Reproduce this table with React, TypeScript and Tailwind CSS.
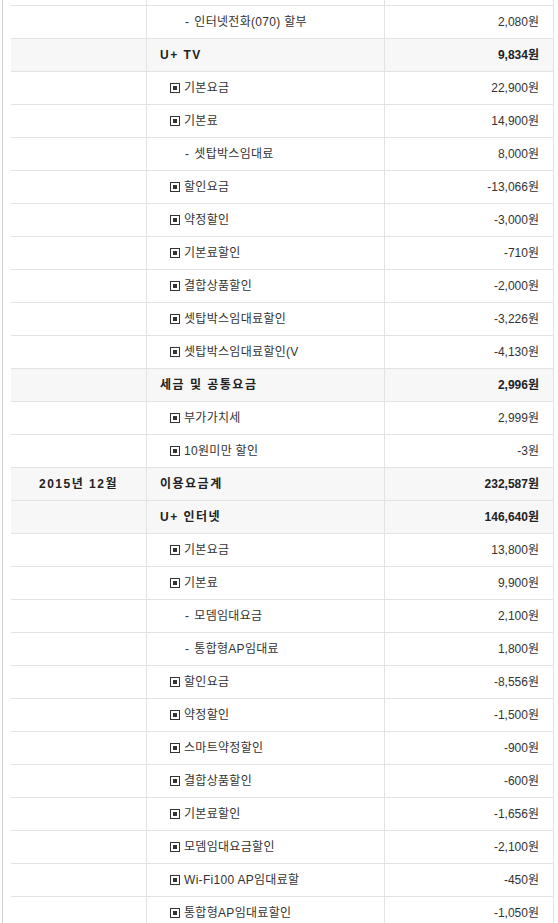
type Row = {
  month?: string;
  label: string;
  amount: string;
  kind: "head" | "item" | "sub";
};

const rows: Row[] = [
  { label: "인터넷전화(070) 할부", amount: "2,080원", kind: "sub" },
  { label: "U+ TV", amount: "9,834원", kind: "head" },
  { label: "기본요금", amount: "22,900원", kind: "item" },
  { label: "기본료", amount: "14,900원", kind: "item" },
  { label: "셋탑박스임대료", amount: "8,000원", kind: "sub" },
  { label: "할인요금", amount: "-13,066원", kind: "item" },
  { label: "약정할인", amount: "-3,000원", kind: "item" },
  { label: "기본료할인", amount: "-710원", kind: "item" },
  { label: "결합상품할인", amount: "-2,000원", kind: "item" },
  { label: "셋탑박스임대료할인", amount: "-3,226원", kind: "item" },
  { label: "셋탑박스임대료할인(V", amount: "-4,130원", kind: "item" },
  { label: "세금 및 공통요금", amount: "2,996원", kind: "head" },
  { label: "부가가치세", amount: "2,999원", kind: "item" },
  { label: "10원미만 할인", amount: "-3원", kind: "item" },
  { month: "2015년 12월", label: "이용요금계", amount: "232,587원", kind: "head" },
  { label: "U+ 인터넷", amount: "146,640원", kind: "head" },
  { label: "기본요금", amount: "13,800원", kind: "item" },
  { label: "기본료", amount: "9,900원", kind: "item" },
  { label: "모뎀임대요금", amount: "2,100원", kind: "sub" },
  { label: "통합형AP임대료", amount: "1,800원", kind: "sub" },
  { label: "할인요금", amount: "-8,556원", kind: "item" },
  { label: "약정할인", amount: "-1,500원", kind: "item" },
  { label: "스마트약정할인", amount: "-900원", kind: "item" },
  { label: "결합상품할인", amount: "-600원", kind: "item" },
  { label: "기본료할인", amount: "-1,656원", kind: "item" },
  { label: "모뎀임대요금할인", amount: "-2,100원", kind: "item" },
  { label: "Wi-Fi100 AP임대료할", amount: "-450원", kind: "item" },
  { label: "통합형AP임대료할인", amount: "-1,050원", kind: "item" },
];

function BoxIcon() {
  return (
    <span className="inline-flex w-[10px] h-[10px] border border-[#333] items-center justify-center mr-[4px] shrink-0">
      <span className="block w-[4px] h-[4px] bg-[#333]" />
    </span>
  );
}

export default function App() {
  return (
    <div
      className="min-h-[923px] bg-white ml-[2px] border-l border-[#cfcfcf] pl-[8px] text-[12px] text-[#333] overflow-hidden"
      style={{ fontFamily: '"Liberation Sans", "Noto Sans CJK KR", sans-serif' }}
    >
      <div className="w-[543px]">
        <div className="grid grid-cols-[136px_238px_169px] h-[6px] border-b border-[#e3e3e3]">
          <div className="border-r border-[#e3e3e3]" />
          <div className="border-r border-[#e3e3e3]" />
          <div className="border-r border-[#e3e3e3]" />
        </div>
        {rows.map((row, index) => {
          const head = row.kind === "head";
          return (
            <div
              key={index}
              className={`grid grid-cols-[136px_238px_169px] h-[33px] border-b border-[#e3e3e3] ${
                head ? "bg-[#f7f7f7] font-bold text-[#222]" : ""
              }`}
            >
              <div className="border-r border-[#e3e3e3] flex items-center justify-center tracking-[1.5px]">
                {row.month}
              </div>
              <div
                className={`border-r border-[#e3e3e3] flex items-center whitespace-nowrap overflow-hidden ${
                  head
                    ? "pl-[13px] tracking-[1.5px]"
                    : row.kind === "item"
                    ? "pl-[23px] tracking-[0.3px]"
                    : "pl-[38px] tracking-[0.3px]"
                }`}
              >
                {row.kind === "item" && <BoxIcon />}
                {row.kind === "sub" && <span className="mr-[5px]">-</span>}
                {row.label}
              </div>
              <div className="border-r border-[#e3e3e3] flex items-center justify-end pr-[14px]">
                {row.amount}
              </div>
            </div>
          );
        })}
      </div>
    </div>
  );
}
